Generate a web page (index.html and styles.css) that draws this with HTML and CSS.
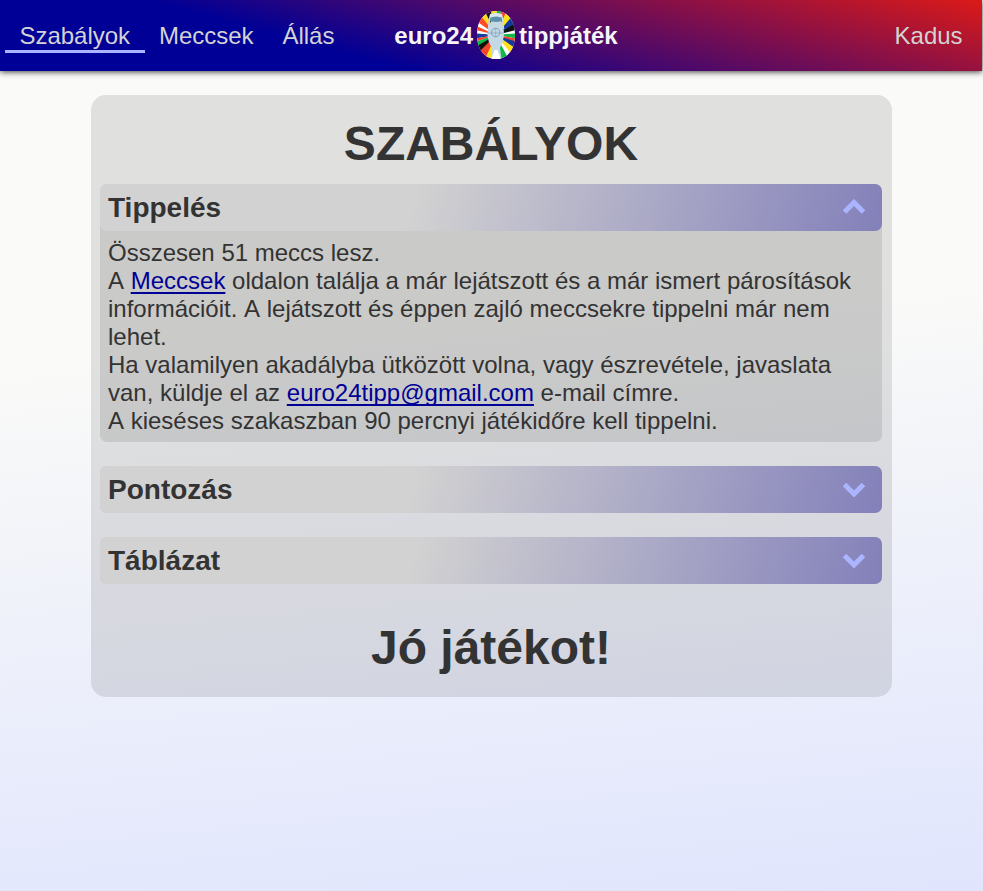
FILE: index.html
```html
<!DOCTYPE html>
<html lang="hu">
<head>
<meta charset="utf-8">
<title>euro24 tippjáték</title>
<link rel="stylesheet" href="styles.css">
</head>
<body>
<header class="navbar">
  <nav class="links">
    <a class="link active" href="#">Szabályok</a>
    <a class="link" href="#">Meccsek</a>
    <a class="link" href="#">Állás</a>
  </nav>
  <div class="brand">
    <span>euro24</span>
    <svg class="logo" viewBox="0 0 38 48">
      <defs><clipPath id="egg"><path d="M19 0C30 0 38 9 38 24C38 39 30 48 19 48C8 48 0 39 0 24C0 9 8 0 19 0Z"/></clipPath></defs>
      <g clip-path="url(#egg)">
        <path fill="#fff" d="M0 0H38V48H0Z"/>
        <path fill="#ffe01a" d="M19 24L13-4H20Z"/>
        <path fill="#111" d="M19 24L5-4H13Z"/>
        <path fill="#ffdc20" d="M19 24L-1 1L6-4Z"/>
        <path fill="#ff4a28" d="M19 24L-5 8L0 0Z"/>
        <path fill="#fff" d="M19 24L-5 13V7Z"/>
        <path fill="#ff4a28" d="M19 24L-5 18V13Z"/>
        <path fill="#123c9c" d="M19 24L-5 22V28Z"/>
        <path fill="#ff4028" d="M19 24L-5 28V32Z"/>
        <path fill="#10b948" d="M19 24L-5 32V39Z"/>
        <path fill="#111" d="M19 24L-5 38L0 46Z"/>
        <path fill="#f5442d" d="M19 24L-1 44L7 52Z"/>
        <path fill="#ffe01a" d="M19 24L7 50L16 54Z"/>
        <path fill="#10b948" d="M19 24L20-4H25Z"/>
        <path fill="#f5442d" d="M19 24L25-4L31-2Z"/>
        <path fill="#ffe01a" d="M19 24L31-3L38 5Z"/>
        <path fill="#123c9c" d="M19 24L37 3L43 11Z"/>
        <path fill="#111" d="M19 24L42 10L43 18Z"/>
        <path fill="#10b948" d="M19 24L43 22V28Z"/>
        <path fill="#f5442d" d="M19 24L43 28V33Z"/>
        <path fill="#123c9c" d="M19 24L43 32L41 40Z"/>
        <path fill="#ffe01a" d="M19 24L41 39L36 45Z"/>
        <path fill="#10b948" d="M19 24L31 47L23 54Z"/>
        <path fill="#5a91aa" d="M12 6Q19 4 26 6L25 10Q19 12 13 10Z"/>
        <path fill="#d9e7ee" d="M13 3Q19 1 25 3L26 7Q19 4 12 7Z"/>
        <path fill="#c5d8e5" d="M14 10Q19 12 24 10L25 14Q27.500 19 27 24Q26.500 31 23 37L24.500 48H13.500L15 37Q11 31 10.500 24Q10 19 12.500 14Z"/>
        <path fill="#fff" d="M17.500 39H20.500L23.500 48H14.500Z"/>
        <path fill="none" stroke="#c5d8e5" stroke-width="1.500" d="M12.500 7L11.500 18M25.500 7L26.500 18"/>
        <circle cx="18.700" cy="21.500" r="4.200" fill="none" stroke="#789fbd"/>
        <path stroke="#789fbd" stroke-width=".6" d="M10.500 22H27M18.700 17V26"/>
      </g>
    </svg>
    <span>tippjáték</span>
  </div>
  <a class="link user" href="#">Kadus</a>
</header>
<main class="card">
  <h1 class="title">SZABÁLYOK</h1>
  <section class="panel">
    <h2 class="panel-head">Tippelés
      <svg class="chevron" viewBox="0 0 24 16"><path d="M2.500 13L12 3.500L21.500 13"/></svg>
    </h2>
    <div class="panel-body">Összesen 51 meccs lesz.<br>
      A <a href="#">Meccsek</a> oldalon találja a már lejátszott és a már ismert párosítások információit. A lejátszott és éppen zajló meccsekre tippelni már nem lehet.<br>
      Ha valamilyen akadályba ütközött volna, vagy észrevétele, javaslata van, küldje el az <a href="#">euro24tipp@gmail.com</a> e-mail címre.<br>
      A kieséses szakaszban 90 percnyi játékidőre kell tippelni.</div>
  </section>
  <section class="panel">
    <h2 class="panel-head">Pontozás
      <svg class="chevron" viewBox="0 0 24 16"><path d="M2.500 3.500L12 13L21.500 3.500"/></svg>
    </h2>
  </section>
  <section class="panel">
    <h2 class="panel-head">Táblázat
      <svg class="chevron" viewBox="0 0 24 16"><path d="M2.500 3.500L12 13L21.500 3.500"/></svg>
    </h2>
  </section>
  <p class="title closing">Jó játékot!</p>
</main>
</body>
</html>
```
FILE: styles.css
```css
* { box-sizing: border-box; }
html { height: 100%; }
body {
  margin: 0;
  min-height: 100%;
  padding-right: 1px;
  background: linear-gradient(175deg, #fafaf8 38%, #e0e5fd 100%);
  color: #333;
  font: 24px/28px "Liberation Sans", Arial, sans-serif;
}
.navbar {
  display: grid;
  grid-template-columns: 1fr auto 1fr;
  align-items: center;
  height: 71px;
  padding: 0 5px;
  background: linear-gradient(15deg, #000096 33%, #dc1a17 100%);
  box-shadow: 0 1px 6px rgba(0, 0, 0, .75);
}
.links { display: flex; }
.link {
  padding: 3px 14.4px 0;
  border-bottom: 3px solid transparent;
  color: #d3d3d3;
  text-decoration: none;
}
.active { border-color: #aab4ff; }
.brand {
  display: flex;
  align-items: center;
  gap: 4px;
  margin-left: 30px;
  color: #f5f5f8;
  font-weight: bold;
}
.brand span { padding-top: 1px; }
.logo { width: 38px; height: 48px; margin-top: -1px; }
.user { justify-self: end; }
.card {
  width: 801px;
  height: 602px;
  margin: 24px 0 0 91px;
  padding: 21px 10px 0 9px;
  border-radius: 15px;
  background: rgba(50, 50, 50, .125);
}
.title {
  margin: 0 0 12px;
  font-size: 48px;
  line-height: 56px;
  font-weight: bold;
  text-align: center;
}
.panel {
  margin-bottom: 24px;
  border-radius: 7px;
  background: rgba(50, 50, 50, .125);
}
.panel-head {
  display: flex;
  align-items: center;
  justify-content: space-between;
  height: 47px;
  margin: 0;
  padding: 0 16px 0 8px;
  border-radius: 7px;
  background: linear-gradient(105deg, #d2d2d2 40%, #8380ba 100%);
  font-size: 28px;
  line-height: 32px;
}
.chevron {
  width: 24px;
  height: 16px;
  margin-top: -1px;
  fill: none;
  stroke: #aab4ff;
  stroke-width: 5;
}
.panel-body {
  padding: 8px 8px 7px;
  font-kerning: none;
}
.panel-body a {
  color: #000096;
  text-decoration: underline 2px;
  text-underline-offset: 3px;
  text-decoration-skip-ink: none;
}
.closing { margin-top: 36px; }
```
